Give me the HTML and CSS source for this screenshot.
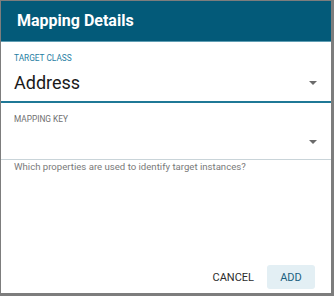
FILE: index.html
```html
<!DOCTYPE html>
<html lang="en">
<head>
  <meta charset="UTF-8">
  <title>Mapping Details</title>
  <link rel="stylesheet" href="styles.css">
</head>
<body>
  <div class="dialog">
    <div class="dialog-title">Mapping Details</div>

    <div class="dialog-body">
      <!-- Target class select -->
      <div class="field field-active">
        <label class="field-label">Target Class</label>
        <div class="field-input">
          <span class="field-value">Address</span>
          <span class="caret"></span>
        </div>
      </div>

      <!-- Mapping key select -->
      <div class="field">
        <label class="field-label">Mapping Key</label>
        <div class="field-input">
          <span class="field-value"></span>
          <span class="caret"></span>
        </div>
      </div>
      <p class="hint">Which properties are used to identify target instances?</p>
    </div>

    <div class="dialog-actions">
      <button class="btn">Cancel</button>
      <button class="btn btn-primary">Add</button>
    </div>
  </div>
</body>
</html>
```

FILE: styles.css
```css
html, body {
  margin: 0;
  padding: 0;
}

body {
  background-color: #7d7d7d;
  font-family: Roboto, "Liberation Sans", sans-serif;
  width: 334px;
  height: 296px;
  overflow: hidden;
}

/* ====== DIALOG ====== */
.dialog {
  margin: 1px 0 0 1px;
  width: 330px;
  height: 292px;
  background-color: #fff;
  display: flex;
  flex-direction: column;
}

.dialog-title {
  background-color: #035a79;
  color: #fff;
  font-size: 16px;
  font-weight: bold;
  height: 40px;
  line-height: 40px;
  padding-left: 16px;
  border-bottom: 1px solid #5f9db3;
}

.dialog-body {
  flex: 1;
  padding-top: 10px;
}

/* ====== FIELDS ====== */
.field {
  padding: 0 13px;
  border-bottom: 1px solid #c9d4d9;
}
.field-active {
  border-bottom: 2px solid #1f7896;
}

.field-label {
  display: block;
  font-size: 8.3px;
  text-transform: uppercase;
  color: #6f6f6f;
  line-height: 12px;
}
.field-active .field-label {
  color: #1e7ea3;
}

.field-input {
  display: flex;
  align-items: center;
  height: 34px;
}
.field-active .field-input {
  height: 37px;
}

.field-value {
  flex: 1;
  font-size: 18px;
  color: #1a1a1a;
}

.caret {
  width: 0;
  height: 0;
  border-left: 4px solid transparent;
  border-right: 4px solid transparent;
  border-top: 4px solid #6b6b6b;
  margin-right: 1px;
}

.field + .field {
  padding-top: 10px;
}

.hint {
  margin: 0 13px;
  font-size: 9.6px;
  line-height: 14px;
  color: #7a7a7a;
}

/* ====== ACTIONS ====== */
.dialog-actions {
  display: flex;
  justify-content: flex-end;
  gap: 4px;
  padding: 0 16px 4px 0;
}

.btn {
  background: none;
  border: none;
  font-family: Roboto, "Liberation Sans", sans-serif;
  font-size: 11px;
  text-transform: uppercase;
  color: #2c2c2c;
  height: 24px;
  padding: 0 9px;
  border-radius: 3px;
}
.btn-primary {
  background-color: #e3eff4;
  color: #1b5f80;
  width: 48px;
}
```
